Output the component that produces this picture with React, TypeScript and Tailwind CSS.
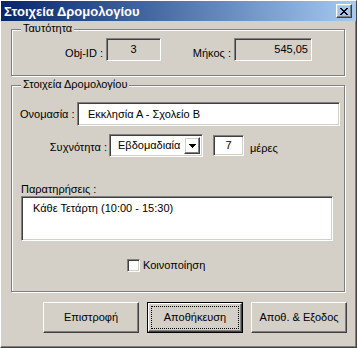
import React from "react";

const sunken =
  "border border-t-[#808080] border-l-[#808080] border-r-white border-b-white shadow-[inset_1px_1px_0_#404040,inset_-1px_-1px_0_#d4d0c8]";
const raised =
  "border border-t-white border-l-white border-r-[#404040] border-b-[#404040] shadow-[inset_-1px_-1px_0_#808080,inset_1px_1px_0_#d4d0c8]";
const etched =
  "relative border border-[#808080] shadow-[inset_1px_1px_0_#fff,1px_1px_0_#fff]";

function GroupBox({ title, className, children }: { title: string; className: string; children: React.ReactNode }) {
  return (
    <div className={`${etched} ${className}`}>
      <span className="absolute left-[9px] top-[-8px] bg-[#d4d0c8] px-[2px] leading-[13px]">{title}</span>
      {children}
    </div>
  );
}

function CloseGlyph() {
  // classic 8x7 pixel X
  const rows = ["11000011", "01100110", "00111100", "00011000", "00111100", "01100110", "11000011"];
  return (
    <svg width="8" height="7" viewBox="0 0 8 7" shapeRendering="crispEdges">
      {rows.map((r, y) =>
        r.split("").map((c, x) => (c === "1" ? <rect key={`${x}-${y}`} x={x} y={y} width="1" height="1" fill="#000" /> : null))
      )}
    </svg>
  );
}

function Button({ label, isDefault }: { label: string; isDefault?: boolean }) {
  if (isDefault) {
    return (
      <div className="h-[31px] w-[96px] border border-black">
        <div className={`${raised} flex h-full w-full items-center justify-center p-[2px]`}>
          <div className="flex h-full w-full items-center justify-center border border-dotted border-black">{label}</div>
        </div>
      </div>
    );
  }
  return <div className={`${raised} flex h-[31px] w-[96px] items-center justify-center`}>{label}</div>;
}

export default function App() {
  return (
    <div className="h-[348px] w-[357px] border border-t-white border-l-white border-r-[#404040] border-b-[#404040] bg-[#d4d0c8] font-['Liberation_Sans',Arial,sans-serif] text-[11px] leading-[13px] text-black shadow-[inset_-1px_-1px_0_#808080]">
      {/* title bar */}
      <div className="flex h-[20px] items-center bg-gradient-to-r from-[#0a246a] to-[#a6caf0] pl-[3px]">
        <span className="flex-1 text-[13px] font-bold text-white">Στοιχεία Δρομολογίου</span>
        <div className={`${raised} mr-[4px] flex h-[14px] w-[16px] items-center justify-center`}>
          <CloseGlyph />
        </div>
      </div>

      <div className="flex flex-col pl-[10px]">
        <GroupBox title="Ταυτότητα" className="mt-[8px] h-[47px] w-[334px]">
          <div className="flex items-start pt-[8px]">
            <span className="mt-[9px] w-[94px] pr-[3px] text-right">Obj-ID :</span>
            <div className={`${sunken} flex h-[23px] w-[55px] justify-center pt-[4px]`}>3</div>
            <span className="mt-[9px] w-[73px] pr-[3px] text-right">Μήκος :</span>
            <div className={`${sunken} flex h-[23px] w-[78px] justify-end pr-[3px] pt-[4px]`}>545,05</div>
          </div>
        </GroupBox>

        <GroupBox title="Στοιχεία Δρομολογίου" className="mt-[9px] h-[207px] w-[334px]">
          <div className="flex flex-col">
            <div className="mt-[16px] flex items-center">
              <span className="w-[65px] pl-[8px]">Ονομασία :</span>
              <div className={`${sunken} flex h-[24px] w-[263px] items-center bg-white pl-[10px]`}>Εκκλησία Α - Σχολείο Β</div>
            </div>

            <div className="mt-[8px] flex items-start">
              <span className="mt-[7px] w-[97px] pr-[2px] text-right">Συχνότητα :</span>
              <div className={`${sunken} flex h-[23px] w-[94px] items-start bg-white p-[2px]`}>
                <span className="flex-1 pl-[6px] pt-[2px]">Εβδομαδιαία</span>
                <div className={`${raised} flex h-[17px] w-[16px] items-center justify-center`}>
                  <svg width="7" height="4" viewBox="0 0 7 4" shapeRendering="crispEdges">
                    <path d="M0 0h7v1H0zM1 1h5v1H1zM2 2h3v1H2zM3 3h1v1H3z" fill="#000" />
                  </svg>
                </div>
              </div>
              <div className={`${sunken} ml-[10px] mt-[1px] flex h-[21px] w-[31px] justify-center bg-white pt-[3px]`}>7</div>
              <span className="ml-[6px] mt-[8px]">μέρες</span>
            </div>

            <span className="ml-[9px] mt-[26px]">Παρατηρήσεις :</span>
            <div className={`${sunken} ml-[9px] h-[45px] w-[312px] bg-white pl-[11px] pt-[5px]`}>Κάθε Τετάρτη (10:00 - 15:30)</div>

            <div className="ml-[115px] mt-[18px] flex items-center">
              <div className={`${sunken} h-[13px] w-[13px] bg-white`} />
              <span className="ml-[3px]">Κοινοποίηση</span>
            </div>
          </div>
        </GroupBox>

        <div className="ml-[32px] mt-[10px] flex gap-[8px]">
          <Button label="Επιστροφή" />
          <Button label="Αποθήκευση" isDefault />
          <Button label="Αποθ. & Εξοδος" />
        </div>
      </div>
    </div>
  );
}
